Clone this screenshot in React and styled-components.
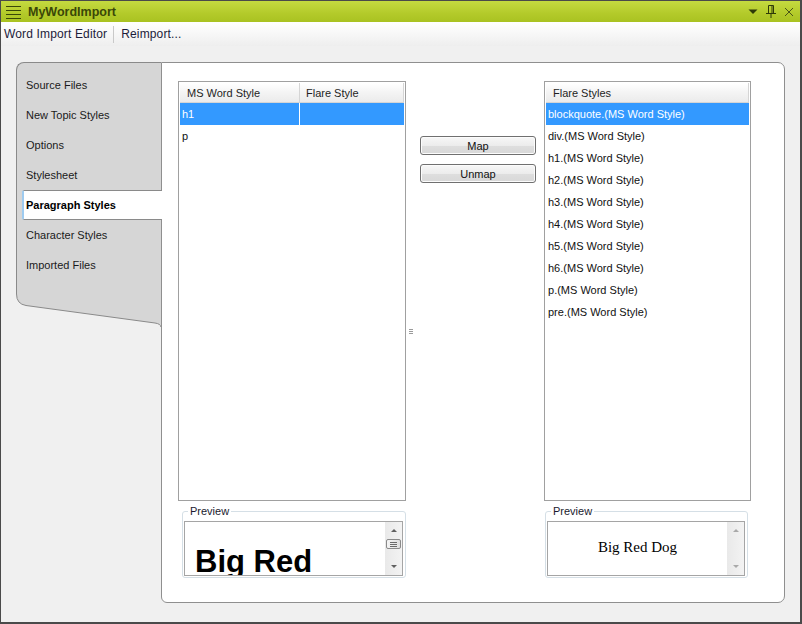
import styled, { createGlobalStyle } from "styled-components";

const GlobalStyle = createGlobalStyle`
    html, body {
        margin: 0;
        padding: 0;
    }
    body {
        font-family: "Liberation Sans", Arial, sans-serif;
        font-size: 11px;
        color: #111;
    }
    * {
        box-sizing: border-box;
    }
`;

const Window = styled.div`
    width: 802px;
    height: 624px;
    display: flex;
    flex-direction: column;
    border-style: solid;
    border-color: #4a4a4a;
    border-width: 1px 2px 2px 1px;
    background: #f0f0f0;
    overflow: hidden;
`;
const TitleBar = styled.div`
    height: 21px;
    display: flex;
    align-items: center;
    padding: 0 6px 0 5px;
    background: linear-gradient(to bottom, #c5da40, #b3ca2a 60%, #a9c221);
    gap: 6px;
`;
const TitleText = styled.div`
    flex: 1;
    font-size: 12.5px;
    font-weight: bold;
    color: #3a4708;
`;
const TitleIcons = styled.div`
    display: flex;
    align-items: center;
    gap: 8px;
`;
const Toolbar = styled.div`
    height: 24px;
    display: flex;
    align-items: center;
    padding-left: 3px;
    background: linear-gradient(to bottom, #ffffff, #f7f7f7 50%, #eeeeee);
`;
const ToolItem = styled.div`
    font-size: 12px;
    letter-spacing: 0.15px;
    color: #1c1c3a;
`;
const ToolSep = styled.div`
    width: 1px;
    height: 17px;
    background: #c9c9c9;
    margin: 0 7px 0 6px;
`;
const Body = styled.div`
    flex: 1;
    display: flex;
    padding: 16px 15px 19px 15px;
`;
const Side = styled.div`
    width: 145px;
    flex-shrink: 0;
    display: flex;
    flex-direction: column;
`;
const TabStrip = styled.div`
    background: #d6d6d6;
    border-left: 1px solid #8a8a8a;
    border-top: 1px solid #8a8a8a;
    border-top-left-radius: 8px;
    padding: 7px 0 12px 0;
    display: flex;
    flex-direction: column;
`;
const Tab = styled.div`
    height: 30px;
    display: flex;
    align-items: center;
    padding-left: 9px;
    color: #1a1a1a;
    font-size: 11px;
`;
const ActiveTab = styled(Tab)`
    position: relative;
    z-index: 1;
    width: 140px;
    margin-left: 5px;
    padding-left: 2px;
    background: #fff;
    border-left: 2px solid #9ecbf0;
    border-top: 1px solid #8a8a8a;
    border-bottom: 1px solid #8a8a8a;
    border-radius: 2px 0 0 2px;
    font-weight: bold;
    color: #000;
`;
const Panel = styled.div`
    flex: 1;
    display: flex;
    background: #fff;
    border: 1px solid #8f8f8f;
    border-radius: 0 7px 7px 6px;
    padding: 18px 0 21px 16px;
`;
const Column = styled.div`
    width: ${(p) => p.$w}px;
    display: flex;
    flex-direction: column;
`;
const List = styled.div`
    height: 420px;
    border: 1px solid #a0a0a0;
    padding: 1px;
    background: #fff;
    display: flex;
    flex-direction: column;
`;
const HeaderRow = styled.div`
    height: 20px;
    display: flex;
    background: linear-gradient(to bottom, #ffffff, #f4f4f4 50%, #ebebeb);
    border-bottom: 1px solid #d5d5d5;
`;
const HeaderCell = styled.div`
    width: ${(p) => (p.$w ? `${p.$w}px` : "auto")};
    flex: ${(p) => (p.$w ? "none" : 1)};
    padding: 1px 0 0 ${(p) => p.$pad || 7}px;
    line-height: 19px;
    border-right: 1px solid #d5d5d5;
    color: #1e1e1e;
`;
const Row = styled.div`
    height: 22px;
    display: flex;
    align-items: center;
    background: ${(p) => (p.$selected ? "#3399ff" : "transparent")};
    color: ${(p) => (p.$selected ? "#fff" : "#111")};
`;
const Cell = styled.div`
    width: ${(p) => (p.$w ? `${p.$w}px` : "auto")};
    flex: ${(p) => (p.$w ? "none" : 1)};
    height: 100%;
    display: flex;
    align-items: center;
    padding-left: 2px;
    border-right: ${(p) => (p.$divider ? "1px solid #fff" : "none")};
`;
const Group = styled.fieldset`
    margin: 4px ${(p) => p.$mr}px 0 ${(p) => p.$ml}px;
    padding: 3px 2px 1px 1px;
    border: 1px solid #d5dfe6;
    border-radius: 3px;
    min-width: 0;
`;
const Legend = styled.legend`
    margin-left: 4px;
    padding: 0 2px;
    font-size: 11px;
    line-height: 13px;
    color: #1a1a2e;
`;
const PreviewBox = styled.div`
    height: 55px;
    border: 1px solid #a5a5a5;
    display: flex;
    overflow: hidden;
    background: #fff;
`;
const PreviewArea = styled.div`
    flex: 1;
    overflow: hidden;
    display: flex;
    align-items: ${(p) => (p.$center ? "center" : "flex-start")};
    justify-content: ${(p) => (p.$center ? "center" : "flex-start")};
    padding: ${(p) => (p.$center ? "0 0 2px 0" : "22px 0 0 10px")};
`;
const BigText = styled.div`
    font-family: "Liberation Sans", Arial, sans-serif;
    font-weight: bold;
    font-size: 31px;
    line-height: 36px;
    color: #000;
    white-space: nowrap;
`;
const SerifText = styled.div`
    font-family: "Liberation Serif", "Times New Roman", serif;
    font-size: 15px;
    color: #000;
`;
const ScrollBar = styled.div`
    width: 17px;
    display: flex;
    flex-direction: column;
    background: linear-gradient(to right, #e9e9e9, #f3f3f3);
`;
const ArrowBtn = styled.div`
    height: 17px;
    display: flex;
    align-items: center;
    justify-content: center;
    &::after {
        content: "";
        border-left: 3px solid transparent;
        border-right: 3px solid transparent;
        ${(p) => (p.$down ? "border-top" : "border-bottom")}: 3px solid ${(p) => (p.$disabled ? "#a9a9a9" : "#606060")};
    }
`;
const Thumb = styled.div`
    height: 10px;
    margin: 0 1px;
    border: 1px solid #8a8a8a;
    border-radius: 2px;
    background: linear-gradient(to right, #f4f4f4, #dedede);
    display: flex;
    align-items: center;
    justify-content: center;
    &::after {
        content: "";
        width: 7px;
        height: 5px;
        background: repeating-linear-gradient(to bottom, #6a6a6a 0 1px, transparent 1px 2px);
    }
`;
const Spacer = styled.div`
    flex: 1;
`;
const Middle = styled.div`
    width: 138px;
    display: flex;
`;
const GripZone = styled.div`
    width: 14px;
    display: flex;
    align-items: center;
    padding-left: 3px;
`;
const Grip = styled.div`
    width: 4px;
    height: 5px;
    background: repeating-linear-gradient(to bottom, #9a9a9a 0 1px, transparent 1px 2px);
`;
const Buttons = styled.div`
    width: 116px;
    margin-top: 55px;
    display: flex;
    flex-direction: column;
    gap: 9px;
`;
const Button = styled.div`
    height: 19px;
    border: 1px solid #707070;
    border-radius: 3px;
    background: linear-gradient(to bottom, #f7f7f7, #ececec 50%, #dedede 51%, #d8d8d8);
    box-shadow: inset 0 0 0 1px #fcfcfc;
    display: flex;
    align-items: center;
    justify-content: center;
    font-size: 11px;
    color: #111;
`;

const tabs = ["Source Files", "New Topic Styles", "Options", "Stylesheet", "Paragraph Styles", "Character Styles", "Imported Files"];
const flareStyles = ["blockquote", "div", "h1", "h2", "h3", "h4", "h5", "h6", "p", "pre"];

function MenuIcon() {
    return (
        <svg width="16" height="14" viewBox="0 0 16 14">
            {[1.5, 5.5, 9.5, 13.5].map((y) => (
                <line key={y} x1="0" y1={y} x2="15" y2={y} stroke="#3a4708" strokeWidth="1" />
            ))}
        </svg>
    );
}

function WindowIcons() {
    return (
        <TitleIcons>
            <svg width="10" height="6" viewBox="0 0 10 6">
                <path d="M0.5 0.5 L9.5 0.5 L5 5 Z" fill="#2e3a08" />
            </svg>
            <svg width="10" height="13" viewBox="0 0 10 13">
                <path d="M2.5 0.5 H7.5 V8.5 M2.5 0.5 V8.5 M0 8.5 H10 M5 8.5 V13 M6 1 V8" stroke="#2e3a08" strokeWidth="1" fill="none" />
            </svg>
            <svg width="10" height="10" viewBox="0 0 10 10">
                <path d="M1 1 L9 9 M9 1 L1 9" stroke="#4a5518" strokeWidth="1" />
            </svg>
        </TitleIcons>
    );
}

function TabTail() {
    return (
        <svg width="146" height="36" viewBox="0 0 146 36" style={{ display: "block" }}>
            <path d="M0 0 L145 0 L145 35 Q144.5 31.8 139 31 L10 13.5 Q0.5 12 0.5 2 Z" fill="#d6d6d6" />
            <path d="M0.5 0 L0.5 2 Q0.5 12 10 13.5 L139 31 Q144.5 31.8 145 35" stroke="#8a8a8a" strokeWidth="1" fill="none" />
        </svg>
    );
}

function Preview({ children, center, disabled, ml, mr }) {
    return (
        <Group $ml={ml} $mr={mr}>
            <Legend>Preview</Legend>
            <PreviewBox>
                <PreviewArea $center={center}>{children}</PreviewArea>
                <ScrollBar>
                    <ArrowBtn $disabled={disabled} />
                    {!disabled && <Thumb />}
                    <Spacer />
                    <ArrowBtn $down $disabled={disabled} />
                </ScrollBar>
            </PreviewBox>
        </Group>
    );
}

export default function App() {
    return (
        <>
            <GlobalStyle />
            <Window>
                <TitleBar>
                    <MenuIcon />
                    <TitleText>MyWordImport</TitleText>
                    <WindowIcons />
                </TitleBar>
                <Toolbar>
                    <ToolItem>Word Import Editor</ToolItem>
                    <ToolSep />
                    <ToolItem>Reimport...</ToolItem>
                </Toolbar>
                <Body>
                    <Side>
                        <TabStrip>
                            {tabs.map((t) =>
                                t === "Paragraph Styles" ? <ActiveTab key={t}>{t}</ActiveTab> : <Tab key={t}>{t}</Tab>
                            )}
                        </TabStrip>
                        <TabTail />
                    </Side>
                    <Panel>
                        <Column $w={228}>
                            <List>
                                <HeaderRow>
                                    <HeaderCell $w={120}>MS Word Style</HeaderCell>
                                    <HeaderCell $pad={6}>Flare Style</HeaderCell>
                                </HeaderRow>
                                <Row $selected>
                                    <Cell $w={120} $divider>h1</Cell>
                                    <Cell />
                                </Row>
                                <Row>
                                    <Cell $w={120}>p</Cell>
                                    <Cell />
                                </Row>
                            </List>
                            <Preview ml={4} mr={0}>
                                <BigText>Big Red</BigText>
                            </Preview>
                        </Column>
                        <Middle>
                            <GripZone>
                                <Grip />
                            </GripZone>
                            <Buttons>
                                <Button>Map</Button>
                                <Button>Unmap</Button>
                            </Buttons>
                        </Middle>
                        <Column $w={207}>
                            <List>
                                <HeaderRow>
                                    <HeaderCell>Flare Styles</HeaderCell>
                                </HeaderRow>
                                {flareStyles.map((s, i) => (
                                    <Row key={s} $selected={i === 0}>
                                        <Cell>{s}.(MS Word Style)</Cell>
                                    </Row>
                                ))}
                            </List>
                            <Preview ml={1} mr={3} center disabled>
                                <SerifText>Big Red Dog</SerifText>
                            </Preview>
                        </Column>
                    </Panel>
                </Body>
            </Window>
        </>
    );
}
